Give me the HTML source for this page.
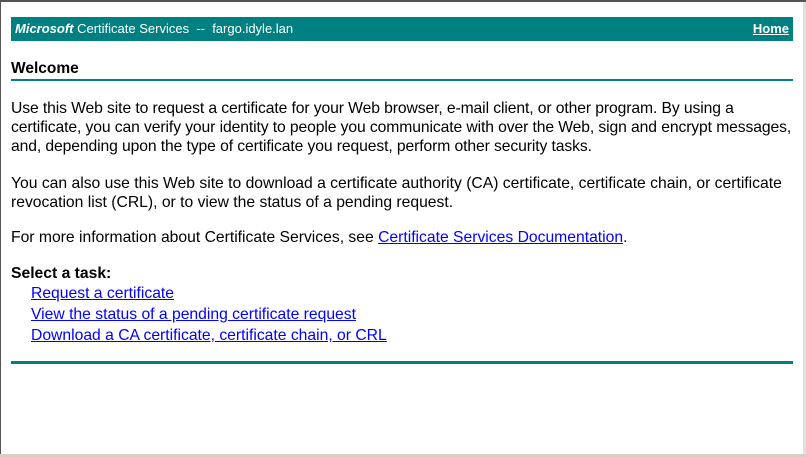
<!DOCTYPE html>
<html><head><style>
html,body{margin:0;padding:0;}
body{width:806px;height:457px;overflow:hidden;background:#fff;position:relative;font-family:"Liberation Sans",Arial,sans-serif;color:#000;}
.topb{position:absolute;left:0;top:0;width:806px;height:2px;background:#555;}
.leftb{position:absolute;left:0;top:0;width:1px;height:457px;background:#555;}
.botb{position:absolute;left:0;top:454px;width:806px;height:3px;background:#d4d0c8;}
.scroll{position:absolute;left:803px;top:2px;width:3px;height:452px;background:#e0e0e0;}
.bar{position:absolute;left:11px;top:17px;width:782px;height:24px;background:#008080;color:#fff;font-size:13px;line-height:24px;}
.bar .t{position:absolute;left:4px;top:0;}
.bar .h{position:absolute;right:4px;top:0;font-weight:bold;text-decoration:underline;}
.w{position:absolute;left:11px;top:60px;font-size:15.5px;font-weight:bold;}
.line{position:absolute;left:11px;width:782px;height:2px;background:#008080;}
.p{position:absolute;left:11px;width:795px;font-size:15.7px;line-height:19px;white-space:nowrap;}
a{color:#00f;text-decoration:underline;}
</style></head><body>
<div class="topb"></div><div class="leftb"></div><div class="scroll"></div><div class="botb"></div>
<div class="bar"><span class="t"><i><b>Microsoft</b></i> Certificate Services &nbsp;-- &nbsp;fargo.idyle.lan</span><span class="h">Home</span></div>
<div class="w">Welcome</div>
<div class="line" style="top:79px"></div>
<div class="p" style="top:99px;letter-spacing:-0.1px">Use this Web site to request a certificate for your Web browser, e-mail client, or other program. By using a<br>certificate, you can verify your identity to people you communicate with over the Web, sign and encrypt messages,<br>and, depending upon the type of certificate you request, perform other security tasks.</div>
<div class="p" style="top:174px">You can also use this Web site to download a certificate authority (CA) certificate, certificate chain, or certificate<br>revocation list (CRL), or to view the status of a pending request.</div>
<div class="p" style="top:228px">For more information about Certificate Services, see <a>Certificate Services Documentation</a>.</div>
<div class="p" style="top:264px;font-weight:bold">Select a task:</div>
<div class="p" style="top:284px;left:31px"><a>Request a certificate</a></div>
<div class="p" style="top:305px;left:31px"><a>View the status of a pending certificate request</a></div>
<div class="p" style="top:326px;left:31px"><a>Download a CA certificate, certificate chain, or CRL</a></div>
<div class="line" style="top:361px;height:3px"></div>
</body></html>
